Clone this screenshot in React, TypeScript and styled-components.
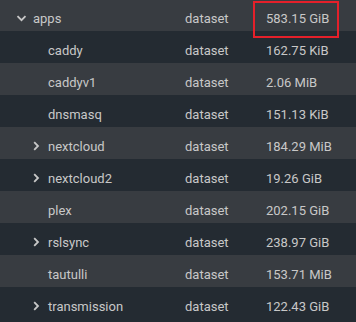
import styled, { createGlobalStyle } from "styled-components";

const GlobalStyle = createGlobalStyle`
  html, body {
    margin: 0;
    padding: 0;
    background: #242b32;
  }
`;

type Row = {
  name: string;
  depth: number;
  toggle?: "open" | "closed";
  type: string;
  used: string;
};

const rows: Row[] = [
  { name: "apps", depth: 0, toggle: "open", type: "dataset", used: "583.15 GiB" },
  { name: "caddy", depth: 1, type: "dataset", used: "162.75 KiB" },
  { name: "caddyv1", depth: 1, type: "dataset", used: "2.06 MiB" },
  { name: "dnsmasq", depth: 1, type: "dataset", used: "151.13 KiB" },
  { name: "nextcloud", depth: 1, toggle: "closed", type: "dataset", used: "184.29 MiB" },
  { name: "nextcloud2", depth: 1, toggle: "closed", type: "dataset", used: "19.26 GiB" },
  { name: "plex", depth: 1, type: "dataset", used: "202.15 GiB" },
  { name: "rslsync", depth: 1, toggle: "closed", type: "dataset", used: "238.97 GiB" },
  { name: "tautulli", depth: 1, type: "dataset", used: "153.71 MiB" },
  { name: "transmission", depth: 1, toggle: "closed", type: "dataset", used: "122.43 GiB" },
];

const Table = styled.div`
  position: relative;
  width: 356px;
  height: 322px;
  overflow: hidden;
  font-family: Roboto, "Liberation Sans", sans-serif;
  font-size: 13px;
  color: #c8c8c8;
`;

const Body = styled.div`
  margin-top: -1px;
`;

const TableRow = styled.div<{ $shade: boolean }>`
  display: grid;
  grid-template-columns: 185px 81px 1fr;
  align-items: center;
  box-sizing: border-box;
  height: 32px;
  padding-top: 6px;
  background: ${(p) => (p.$shade ? "#383c41" : "#242b32")};
`;

const NameCell = styled.div<{ $depth: number }>`
  display: flex;
  align-items: center;
  gap: 4px;
  padding-left: ${(p) => 14 + p.$depth * 15}px;
`;

const Toggle = styled.span`
  display: flex;
  align-items: center;
  justify-content: center;
  width: 15px;
  height: 15px;
`;

const Cell = styled.div``;

const Highlight = styled.div`
  position: absolute;
  left: 253px;
  top: 1px;
  width: 86px;
  height: 37px;
  box-sizing: border-box;
  border: 2px solid #e5202a;
  pointer-events: none;
`;

const Chevron = ({ open }: { open: boolean }) =>
  open ? (
    <svg width="11" height="7" viewBox="0 0 11 7">
      <polyline points="1.5,1.2 5.5,5.2 9.5,1.2" fill="none" stroke="#c8c8c8" strokeWidth="1.8" />
    </svg>
  ) : (
    <svg width="7" height="10" viewBox="0 0 7 10">
      <polyline points="1.2,1.2 5,5 1.2,8.8" fill="none" stroke="#c8c8c8" strokeWidth="1.8" />
    </svg>
  );

export default function App() {
  return (
    <>
      <GlobalStyle />
      <Table>
        <Body>
          {rows.map((r, i) => (
            <TableRow key={r.name} $shade={i % 2 === 0}>
              <NameCell $depth={r.depth}>
                <Toggle>{r.toggle && <Chevron open={r.toggle === "open"} />}</Toggle>
                <span>{r.name}</span>
              </NameCell>
              <Cell>{r.type}</Cell>
              <Cell>{r.used}</Cell>
            </TableRow>
          ))}
        </Body>
        <Highlight />
      </Table>
    </>
  );
}
